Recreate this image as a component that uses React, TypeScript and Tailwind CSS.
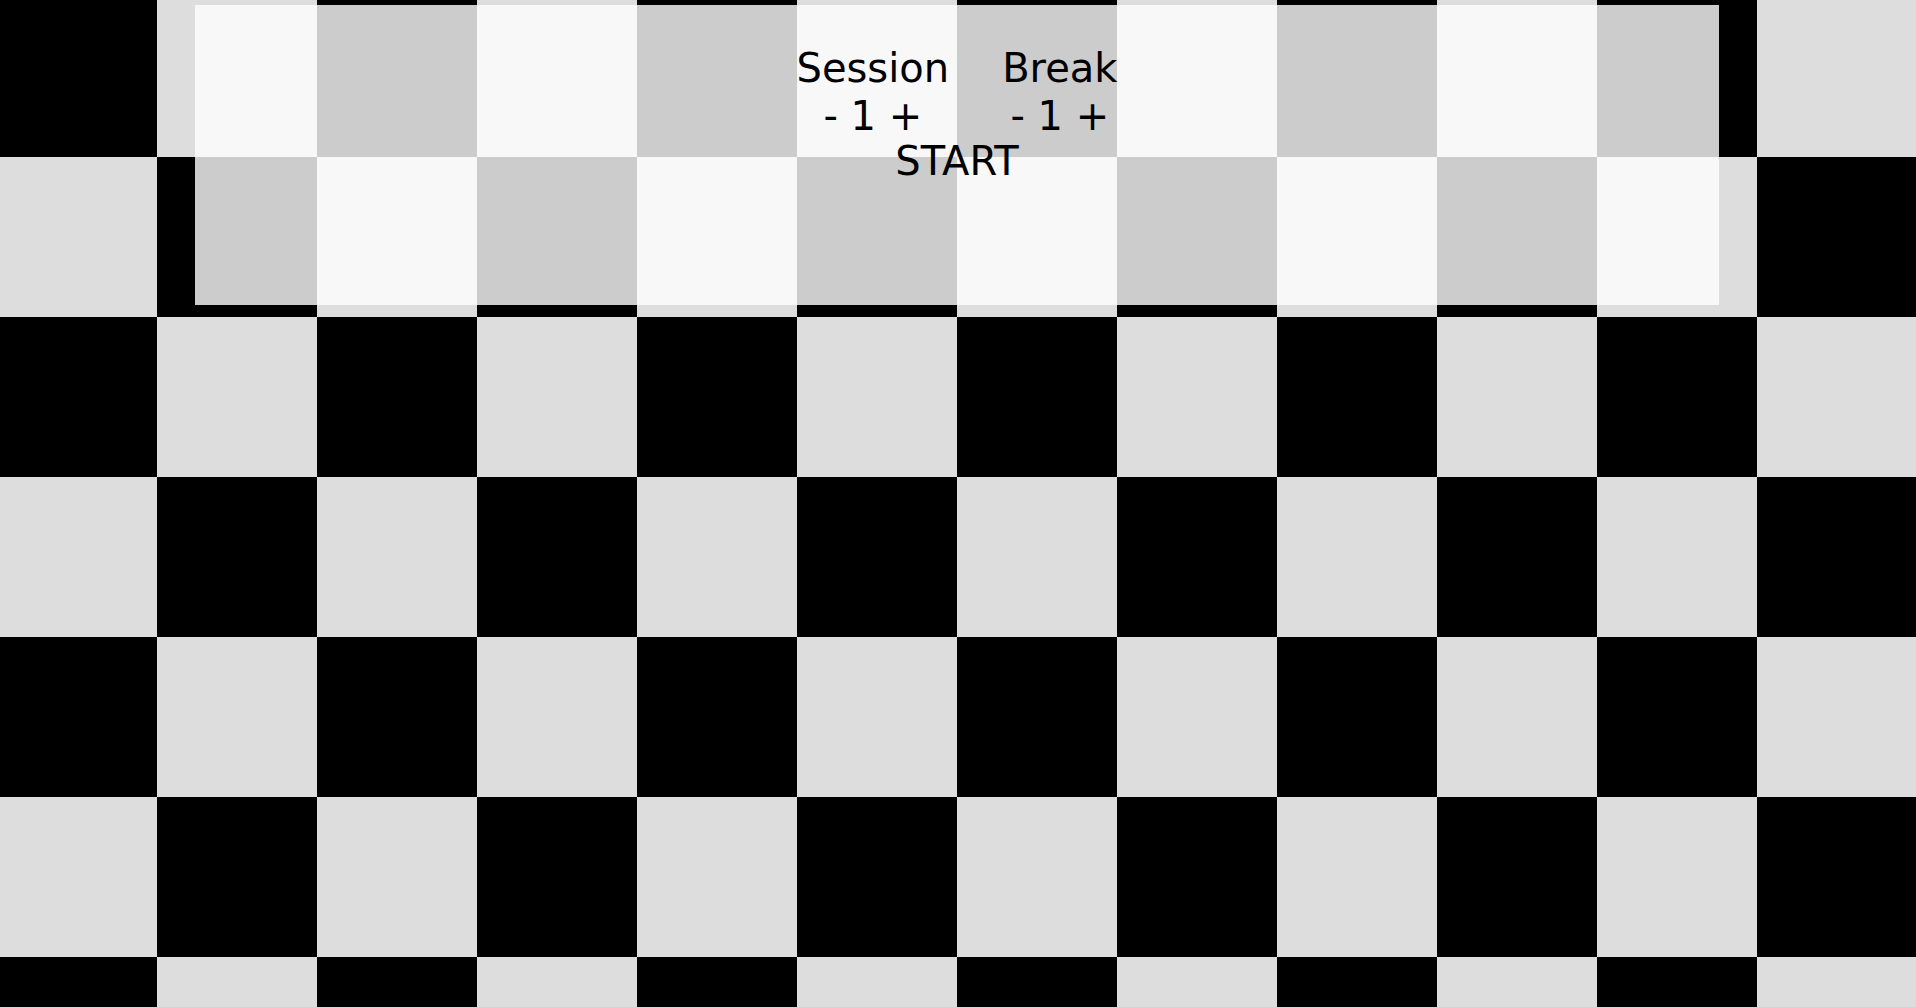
import React from 'react';

const Counter: React.FC<{ label: string; value: number }> = ({ label, value }) => (
  <div className="flex flex-col items-center">
    <div>{label}</div>
    <div className="mt-[2px] whitespace-pre">{`- ${value} +`}</div>
  </div>
);

export default function App() {
  return (
    <div className="min-h-[1007px] w-full bg-[repeating-conic-gradient(#dddddd_0_25%,#000000_0_50%)] bg-size-[320px_320px] bg-position-[-3px_-3px] pt-[5px] font-['DejaVu_Sans',sans-serif] text-[40px] leading-[normal] text-black">
      <div className="ml-[195px] h-[300px] w-[1524px] bg-white/80 pt-[40px]">
        <div className="flex justify-center gap-[53px]">
          <Counter label="Session" value={1} />
          <Counter label="Break" value={1} />
        </div>
        <div className="-mt-[1px] text-center">START</div>
      </div>
    </div>
  );
}
